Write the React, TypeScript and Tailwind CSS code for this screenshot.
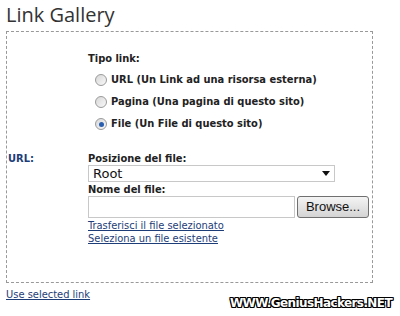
import React from 'react';

const boldBase = "font-['DejaVu_Sans_Condensed',Tahoma,sans-serif] font-bold text-[11px]";
const bold = `${boldBase} text-[#222]`;

function Radio({ checked }: { checked?: boolean }) {
    return (
        <span className="w-[12px] h-[12px] rounded-full border border-[#9a9a9a] bg-gradient-to-br from-[#d8d8d8] to-[#f8f8f8] flex items-center justify-center shrink-0">
            {checked && <span className="w-[5px] h-[5px] rounded-full bg-[#2a5fb0]" />}
        </span>
    );
}

export default function App() {
    // tipo link options
    const options = [
        { label: 'URL (Un Link ad una risorsa esterna)' },
        { label: 'Pagina (Una pagina di questo sito)' },
        { label: 'File (Un File di questo sito)', checked: true },
    ];

    return (
        <div className="w-[400px] h-[316px] bg-white relative overflow-hidden font-['DejaVu_Sans_Condensed',Tahoma,sans-serif]">
            <h1 className="pl-[6px] pt-[3px] h-[31px] text-[20px] leading-[24px] text-[#333] font-['Open_Sans',sans-serif]">Link Gallery</h1>

            {/* dashed panel */}
            <div className="ml-[6px] w-[367px] h-[252px] border border-dashed border-[#999] pt-[19px]">
                <div className="pl-[81px]">
                    <div className={bold}>Tipo link:</div>
                    <div className="pl-[7px] mt-[6px] flex flex-col gap-[9px]">
                        {options.map(o => (
                            <label key={o.label} className={`flex items-center gap-[4px] h-[13px] ${bold}`}>
                                <Radio checked={o.checked} />
                                {o.label}
                            </label>
                        ))}
                    </div>
                </div>

                <div className="flex mt-[21px]">
                    <div className={`w-[81px] pl-[1px] ${boldBase} text-[#1d3d78] leading-[13px]`}>URL:</div>
                    <div className="flex flex-col">
                        <div className={`${bold} leading-[13px]`}>Posizione del file:</div>
                        <div className="w-[247px] h-[17px] border border-[#c8c8c8] flex items-center justify-between pl-[4px] pr-[4px] text-[13px] text-[#111] font-['DejaVu_Sans',sans-serif]">
                            <span className="leading-[15px]">Root</span>
                            <svg width="8" height="5" viewBox="0 0 8 5"><path d="M0 0h8L4 5z" fill="#111" /></svg>
                        </div>
                        <div className={`${bold} leading-[13px] mt-[1px]`}>Nome del file:</div>
                        <div className="flex items-center">
                            <div className="w-[207px] h-[22px] border border-[#c8c8c8]" />
                            <button className="ml-[2px] w-[72px] h-[22px] rounded-[3px] border border-[#707070] bg-gradient-to-b from-[#f4f4f4] to-[#d4d4d4] text-[13px] text-[#111] font-['Liberation_Sans',sans-serif] leading-none">Browse...</button>
                        </div>
                        <div className="mt-[1px] flex flex-col text-[11px] leading-[13px] text-[#1d3d78] underline">
                            <a>Trasferisci il file selezionato</a>
                            <a>Seleziona un file esistente</a>
                        </div>
                    </div>
                </div>
            </div>

            <a className="block pl-[6px] mt-[5px] text-[11px] leading-[13px] text-[#1d3d78] underline">Use selected link</a>

            {/* watermark */}
            <div
                className="absolute right-[8px] bottom-[4px] text-[12px] font-bold text-white font-['DejaVu_Sans',sans-serif] tracking-[-0.6px]"
                style={{ textShadow: '1px 0 #000,-1px 0 #000,0 1px #000,0 -1px #000,1px 1px #000,-1px -1px #000,1px -1px #000,-1px 1px #000' }}
            >
                WWW.GeniusHackers.NET
            </div>
        </div>
    );
}
